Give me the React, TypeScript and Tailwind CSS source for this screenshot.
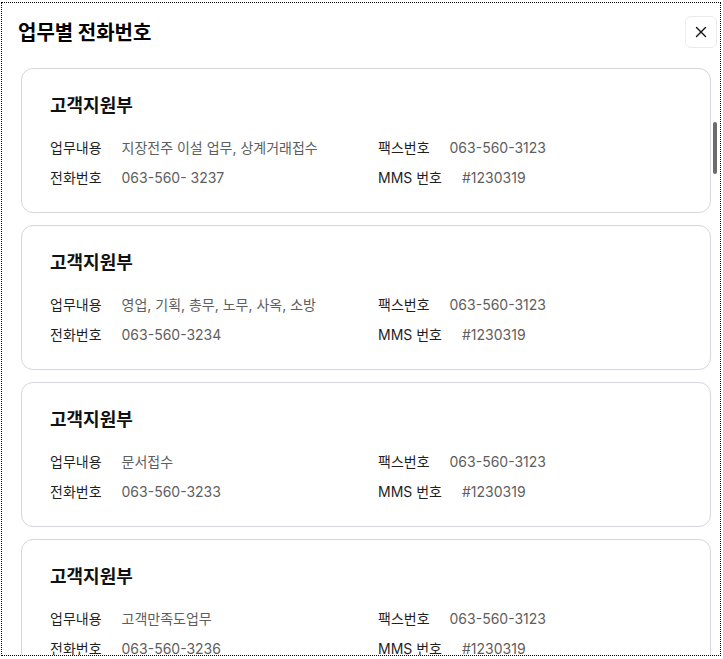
import React from "react";

type Item = { title: string; work: string; tel: string; fax: string; mms: string };

const items: Item[] = [
  { title: "고객지원부", work: "지장전주 이설 업무, 상계거래접수", tel: "063-560- 3237", fax: "063-560-3123", mms: "#1230319" },
  { title: "고객지원부", work: "영업, 기획, 총무, 노무, 사옥, 소방", tel: "063-560-3234", fax: "063-560-3123", mms: "#1230319" },
  { title: "고객지원부", work: "문서접수", tel: "063-560-3233", fax: "063-560-3123", mms: "#1230319" },
  { title: "고객지원부", work: "고객만족도업무", tel: "063-560-3236", fax: "063-560-3123", mms: "#1230319" },
];

function Row({ label, value }: { label: string; value: string }) {
  return (
    <div className="flex items-center gap-5 h-5 text-[14px] leading-5 whitespace-nowrap">
      <span className="text-[#1f1f1f]">{label}</span>
      <span className="text-[#5e5e5e]">{value}</span>
    </div>
  );
}

function Card({ item }: { item: Item }) {
  return (
    <div className="h-[145px] shrink-0 rounded-[12px] border border-[#d6d6dc] bg-white px-7 pt-[24px]">
      <div className="text-[18px] leading-[26px] font-bold text-[#111]">{item.title}</div>
      <div className="mt-[19px] grid grid-cols-[328px_1fr] gap-y-[10px]">
        <Row label="업무내용" value={item.work} />
        <Row label="팩스번호" value={item.fax} />
        <Row label="전화번호" value={item.tel} />
        <Row label="MMS 번호" value={item.mms} />
      </div>
    </div>
  );
}

export default function App() {
  return (
    <div
      className="h-[659px] w-[723px] bg-white pt-[2px] pl-[1px] pr-[2px] pb-[3px]"
      style={{ fontFamily: "Inter, 'Noto Sans CJK KR', sans-serif" }}
    >
      <div className="relative flex h-full flex-col overflow-hidden border border-dotted border-black">
        <div className="flex items-start justify-between pl-[16px] pr-[3px] pt-[13px]">
          <h1
            className="mt-[2px] text-[20px] leading-[28px] font-bold text-black"
            style={{ fontFamily: "'Noto Sans CJK KR', sans-serif" }}
          >
            업무별 전화번호
          </h1>
          <button className="flex h-8 w-8 items-center justify-center rounded-[6px] border border-[#ececec] bg-white">
            <svg width="12" height="12" viewBox="0 0 12 12" fill="none" stroke="#111" strokeWidth="1.4" strokeLinecap="round">
              <path d="M1.5 1.5 L10.5 10.5 M10.5 1.5 L1.5 10.5" />
            </svg>
          </button>
        </div>
        <div className="mt-[20px] flex flex-col gap-3 pl-[19px] pr-[9px]">
          {items.map((it, i) => (
            <Card key={i} item={it} />
          ))}
        </div>
        <div className="absolute left-[711px] top-[119px] h-[52px] w-[4px] rounded-full bg-[#6b6b6b]" />
      </div>
    </div>
  );
}
